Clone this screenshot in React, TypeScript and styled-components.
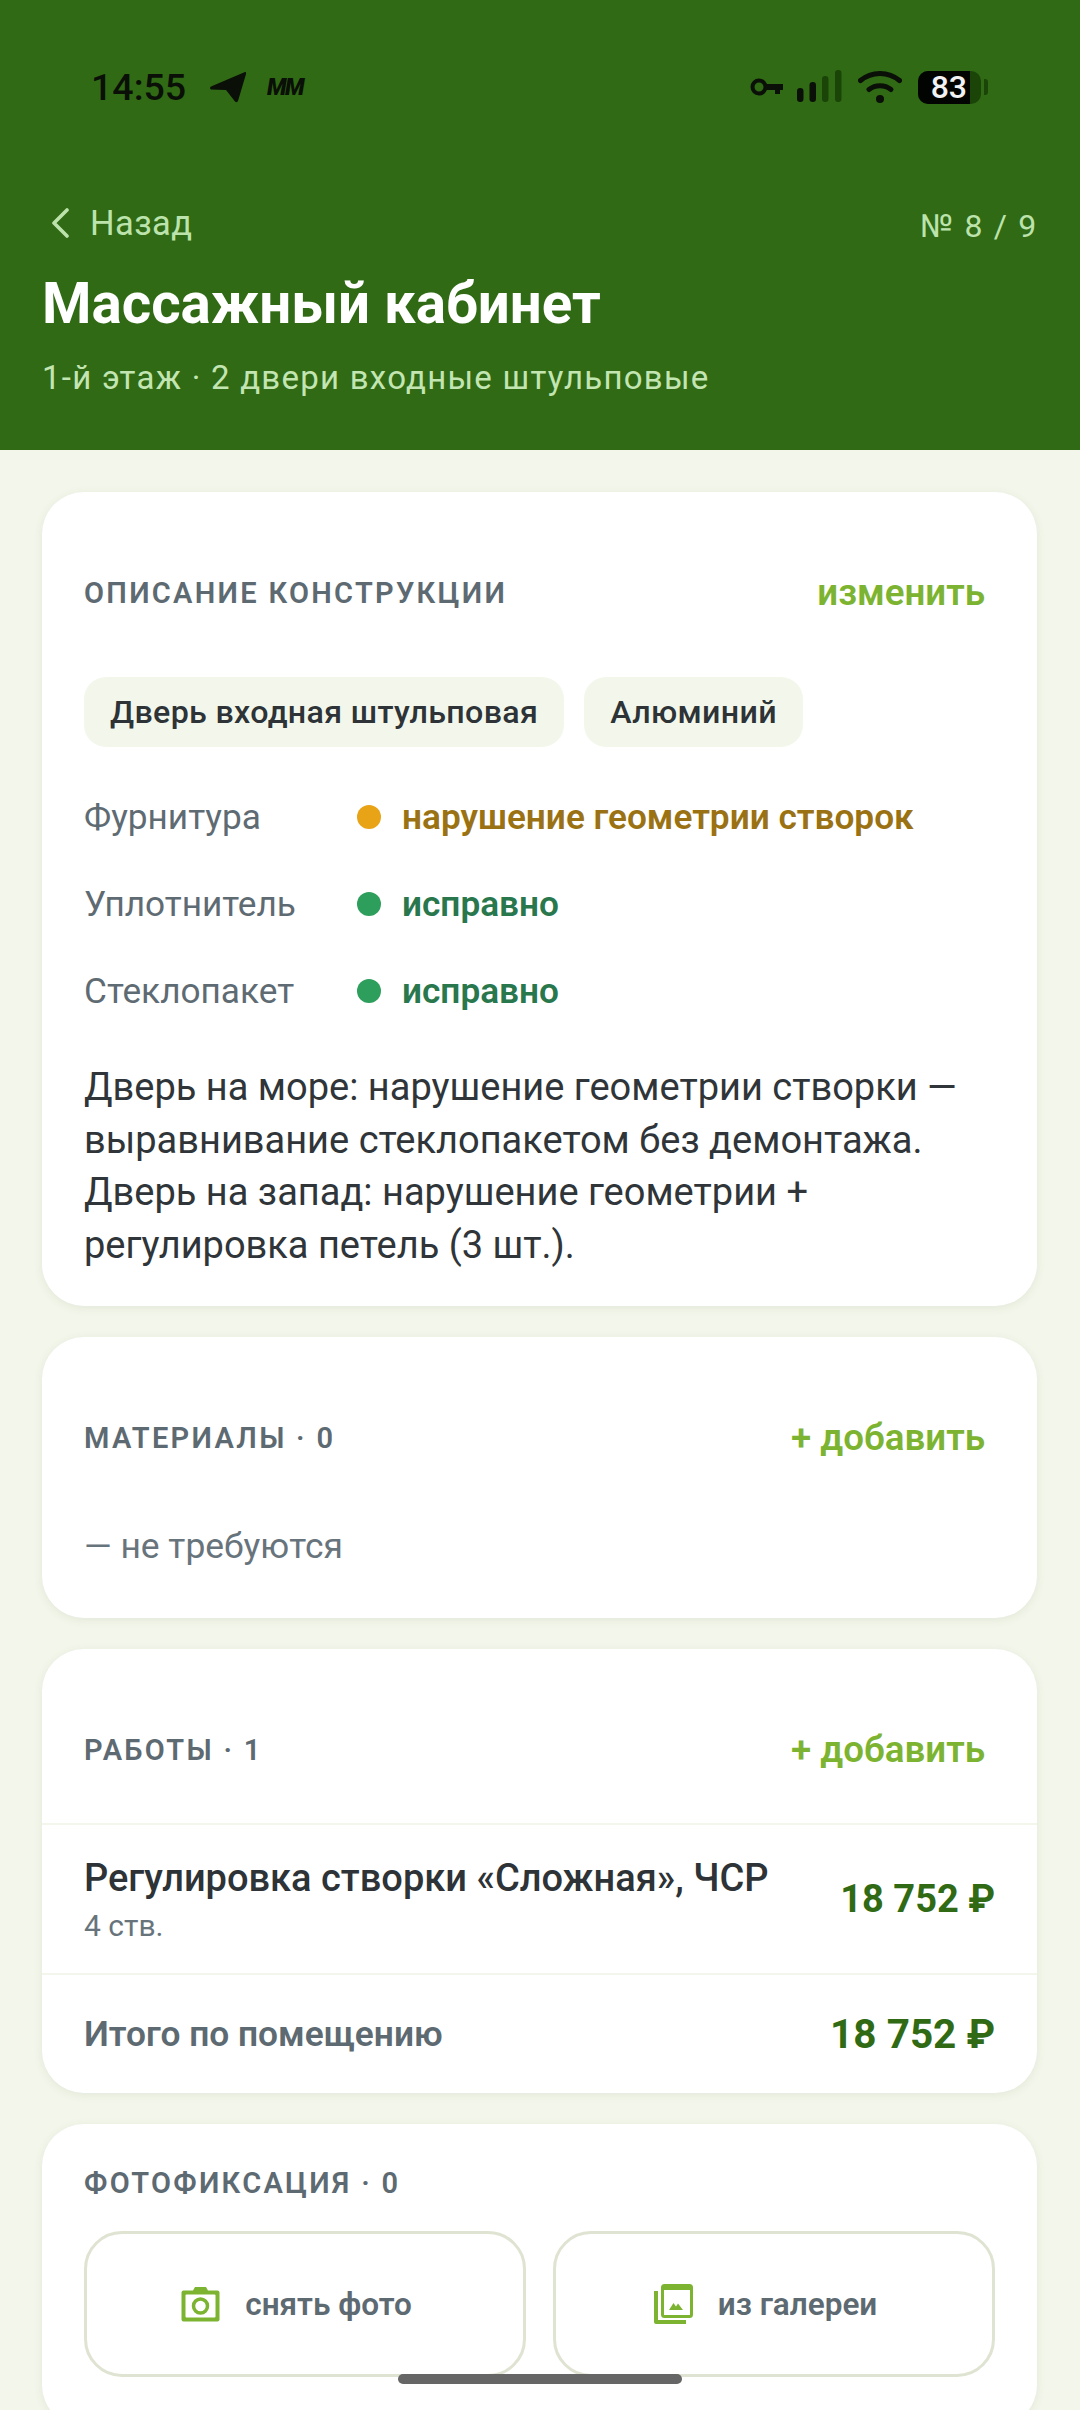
import React from "react";
import styled, { createGlobalStyle } from "styled-components";

const Global = createGlobalStyle`
  html, body { margin: 0; padding: 0; height: 2410px; overflow: hidden; background: #f3f7eb; }
  * { box-sizing: border-box; }
  body { font-family: Roboto, "Noto Sans", sans-serif; }
`;
const Screen = styled.div`
  position: relative; width: 1080px; height: 2410px; overflow: hidden; background: #f3f7eb;
`;
const Header = styled.header`
  height: 450px; background: #306a14; padding: 0 43px 0 42px; display: flex; flex-direction: column;
`;
const StatusBar = styled.div`
  padding: 0 49px; margin-top: 43px; display: flex; align-items: flex-start; justify-content: space-between; height: 88px;
`;
const StatusGroup = styled.div`
  display: flex; align-items: center; height: 88px;
`;
const Time = styled.span`
  font-size: 37.5px; font-weight: 500; color: #0a0f07; width: 118px; line-height: 88px; height: 88px;
`;
const MmMark = styled.span`
  font-size: 23px; font-weight: 900; font-style: italic; color: #0a0f07; margin-left: 20px; letter-spacing: -1.5px; line-height: 1;
`;
const Battery = styled.div`
  width: 63px; height: 33px; border-radius: 10px; background: #1a4408; margin-left: 16px;
  display: flex;
`;
const BatteryFill = styled.div`
  width: 52px; border-radius: 10px 0 0 10px; background: #020402; color: #f2f2f2; font-size: 32px; font-weight: 500; line-height: 33px; text-align: right; padding-right: 3px;
`;
const BatteryNub = styled.div`
  width: 4px; height: 16px; background: #1a4408; border-radius: 0 3px 3px 0; margin-left: 3px;
`;
const TopRow = styled.div`
  display: flex; justify-content: space-between; align-items: center; height: 48px; margin-top: 68px; color: #bde3ac;
`;
const Back = styled.div`
  display: flex; align-items: center; gap: 20px; font-size: 34.5px; padding-left: 8px; letter-spacing: 0.4px;
`;
const Counter = styled.div`
  font-size: 32px; letter-spacing: 1.7px; font-weight: 400; margin: 6px -1px 0 0;
`;
const Title = styled.h1`
  margin: 24px 0 0; font-size: 56.5px; line-height: 66px; font-weight: 700; color: #fff;
`;
const Sub = styled.div`
  margin-top: 21px; font-size: 33px; line-height: 40px; color: #c3e5b2; letter-spacing: 1.25px;
`;
const Content = styled.main`
  padding: 42px 43px 0 42px; display: flex; flex-direction: column; gap: 31px;
`;
const Card = styled.section<{ $top: number; $bottom: number }>`
  background: #fff; border-radius: 42px; box-shadow: 0 2px 10px rgba(60, 80, 50, 0.09);
  padding-top: ${(p) => p.$top}px; padding-bottom: ${(p) => p.$bottom}px;
`;
const CardHead = styled.div`
  display: flex; align-items: center; justify-content: space-between; height: 86px; padding: 0 10px 0 42px;
`;
const HeadLabel = styled.div`
  font-size: 29px; font-weight: 600; letter-spacing: 2.3px; color: #5d6a72; margin-top: 1px;
`;
const HeadAction = styled.button`
  border: 0; background: none; padding: 10px 42px 10px 10px; font: 600 36.7px Roboto, sans-serif; color: #7cb431;
`;
const Chips = styled.div`
  display: flex; gap: 20px; margin: 42px 42px 0;
`;
const Chip = styled.span`
  height: 70px; padding: 0 26px; border-radius: 22px; background: #f3f7eb; font-size: 32.2px; font-weight: 500; line-height: 70px; color: #2d3336; letter-spacing: 0.35px;
`;
const Specs = styled.div`
  margin: 26px 42px 0;
`;
const SpecRow = styled.div`
  display: grid; grid-template-columns: 273px 45px 1fr; align-items: center; height: 87px;
`;
const SpecLabel = styled.span`
  font-size: 35.2px; color: #5f6b73;
`;
const Dot = styled.span<{ $c: string }>`
  width: 24px; height: 24px; border-radius: 50%; background: ${(p) => p.$c};
`;
const SpecValue = styled.span<{ $c: string }>`
  font-size: 35.2px; font-weight: 600; color: ${(p) => p.$c};
`;
const Note = styled.p`
  margin: 27px 42px 0; font-size: 38px; line-height: 52.5px; color: #2f3538;
`;
const Empty = styled.div`
  margin: 44px 42px 0; font-size: 35.4px; line-height: 44px; color: #68747c;
`;
const Line = styled.div`
  height: 2px; background: #f3f7eb;
`;
const CardGap = styled.div`
  height: 31px;
`;
const WorkRow = styled.div`
  height: 148px; padding: 0 42px; display: flex; align-items: center; justify-content: space-between;
`;
const WorkTitle = styled.div`
  font-size: 38px; line-height: 48px; font-weight: 500; color: #2d3336;
`;
const WorkSub = styled.div`
  font-size: 30px; line-height: 36px; color: #68747c; margin-top: 6px;
`;
const Price = styled.div`
  font-size: 38px; font-weight: 700; color: #306a14;
`;
const TotalRow = styled.div`
  height: 118px; padding: 0 42px; display: flex; align-items: center; justify-content: space-between;
`;
const TotalLabel = styled.div`
  font-size: 35.3px; font-weight: 600; color: #5d6a72;
`;
const TotalPrice = styled.div`
  font-size: 40.5px; font-weight: 700; color: #306a14;
`;
const PlainHead = styled.div`
  margin: 0 42px; font-size: 29px; line-height: 36px; font-weight: 600; letter-spacing: 2.3px; color: #5d6a72;
`;
const PhotoGrid = styled.div`
  display: grid; grid-template-columns: 1fr 1fr; gap: 27px; margin: 30px 42px 0;
`;
const PhotoBtn = styled.button`
  height: 146px; padding: 0 17px 0 0; border: 3px solid #dfe3d1; border-radius: 38px; background: #fff; display: flex; align-items: center; justify-content: center; gap: 25px;
  font: 600 31.5px Roboto, sans-serif; color: #5d6a72;
`;
const HomeBar = styled.div`
  position: absolute; left: 398px; top: 2374px; width: 284px; height: 10px; border-radius: 5px; background: #666;
`;

const Telegram = () => (
  <svg width="38" height="32" viewBox="0 0 38 32">
    <path d="M36 1 2 15.500Q0 17 2 18.500L17 19l9 11.500Q28 32 29 30L37 3Q37.500.5 36 1z" fill="#0a0f07" />
  </svg>
);
const Key = () => (
  <svg width="34" height="20" viewBox="0 0 34 20" fill="none">
    <circle cx="9" cy="10" r="6.500" stroke="#0a0f07" strokeWidth="4" />
    <path d="M15 7h18v6h-3v4h-5v-4h-10z" fill="#0a0f07" />
  </svg>
);
const Signal = () => (
  <svg width="46" height="34" viewBox="0 0 46 34" style={{ marginLeft: 13 }}>
    <rect x="0" y="18" width="6.500" height="14" rx="3.200" fill="#0a0f07" />
    <rect x="12.500" y="12" width="6.500" height="20" rx="3.200" fill="#0a0f07" />
    <rect x="25" y="6" width="6.500" height="26" rx="3.200" fill="#1a4408" />
    <rect x="38" y="0" width="6.500" height="32" rx="3.200" fill="#1a4408" />
  </svg>
);
const Wifi = () => (
  <svg width="44" height="34" viewBox="0 0 44 34" fill="none" style={{ marginLeft: 15 }}>
    <path d="M2.500 10.500C13.500 1 30.500 1 41.500 10.500" stroke="#0a0f07" strokeWidth="5" strokeLinecap="round" />
    <path d="M11 19.500c6.500-5 15.500-5 22 0" stroke="#0a0f07" strokeWidth="5" strokeLinecap="round" />
    <circle cx="22" cy="29" r="4" fill="#0a0f07" />
  </svg>
);
const Chevron = () => (
  <svg width="20" height="30" viewBox="0 0 20 30" fill="none">
    <path d="M17 2 4 15l13 13" stroke="#bde3ac" strokeWidth="3.600" strokeLinecap="round" strokeLinejoin="round" />
  </svg>
);
const Camera = () => (
  <svg width="39" height="36" viewBox="0 0 39 36" fill="none">
    <path d="M12 4.500 14 1h11l2 3.500h9.500A2 2 0 0 1 38.500 6.500v27a2 2 0 0 1-2 2h-34a2 2 0 0 1-2-2v-27a2 2 0 0 1 2-2z" fill="#7cb431" />
    <rect x="4.500" y="8.500" width="30" height="23" rx="1" fill="#fff" />
    <circle cx="19.500" cy="20" r="7" stroke="#7cb431" strokeWidth="3.500" />
  </svg>
);
const Gallery = () => (
  <svg width="39" height="40" viewBox="0 0 39 40" fill="none">
    <path d="M0 7h4v29h28v4H2a2 2 0 0 1-2-2z" fill="#7cb431" />
    <rect x="8.500" y="1.500" width="29" height="31" rx="2" stroke="#7cb431" strokeWidth="3" />
    <rect x="10" y="3" width="26" height="3" fill="#7cb431" />
    <path d="M15 26l4.500-7 2.500 3.500 2-3 5 6.500z" fill="#7cb431" />
  </svg>
);

const specs = [
  { l: "Фурнитура", d: "#e8a317", c: "#9a7213", v: "нарушение геометрии створок" },
  { l: "Уплотнитель", d: "#2e9e5c", c: "#28774d", v: "исправно" },
  { l: "Стеклопакет", d: "#2e9e5c", c: "#28774d", v: "исправно" },
];

export default function App() {
  return (
    <Screen>
      <Global />
      <Header>
        <StatusBar>
          <StatusGroup>
            <Time>14:55</Time>
            <Telegram />
            <MmMark>ММ</MmMark>
          </StatusGroup>
          <StatusGroup>
            <Key />
            <Signal />
            <Wifi />
            <Battery>
              <BatteryFill>83</BatteryFill>
            </Battery>
            <BatteryNub />
          </StatusGroup>
        </StatusBar>
        <TopRow>
          <Back>
            <Chevron />
            Назад
          </Back>
          <Counter>№ 8 / 9</Counter>
        </TopRow>
        <Title>Массажный кабинет</Title>
        <Sub>1-й этаж · 2 двери входные штульповые</Sub>
      </Header>
      <Content>
        <Card $top={57} $bottom={35}>
          <CardHead>
            <HeadLabel>ОПИСАНИЕ КОНСТРУКЦИИ</HeadLabel>
            <HeadAction>изменить</HeadAction>
          </CardHead>
          <Chips>
            <Chip>Дверь входная штульповая</Chip>
            <Chip>Алюминий</Chip>
          </Chips>
          <Specs>
            {specs.map((s) => (
              <SpecRow key={s.l}>
                <SpecLabel>{s.l}</SpecLabel>
                <Dot $c={s.d} />
                <SpecValue $c={s.c}>{s.v}</SpecValue>
              </SpecRow>
            ))}
          </Specs>
          <Note>
            Дверь на море: нарушение геометрии створки — выравнивание стеклопакетом без демонтажа. Дверь на запад:
            нарушение геометрии + регулировка петель (3 шт.).
          </Note>
        </Card>
        <Card $top={57} $bottom={50}>
          <CardHead>
            <HeadLabel>МАТЕРИАЛЫ · 0</HeadLabel>
            <HeadAction>+ добавить</HeadAction>
          </CardHead>
          <Empty>— не требуются</Empty>
        </Card>
        <Card $top={57} $bottom={0}>
          <CardHead>
            <HeadLabel>РАБОТЫ · 1</HeadLabel>
            <HeadAction>+ добавить</HeadAction>
          </CardHead>
          <CardGap />
          <Line />
          <WorkRow>
            <div>
              <WorkTitle>Регулировка створки «Сложная», ЧСР</WorkTitle>
              <WorkSub>4 ств.</WorkSub>
            </div>
            <Price>18 752 ₽</Price>
          </WorkRow>
          <Line />
          <TotalRow>
            <TotalLabel>Итого по помещению</TotalLabel>
            <TotalPrice>18 752 ₽</TotalPrice>
          </TotalRow>
        </Card>
        <Card $top={41} $bottom={50}>
          <PlainHead>ФОТОФИКСАЦИЯ · 0</PlainHead>
          <PhotoGrid>
            <PhotoBtn>
              <Camera />
              снять фото
            </PhotoBtn>
            <PhotoBtn>
              <Gallery />
              из галереи
            </PhotoBtn>
          </PhotoGrid>
        </Card>
      </Content>
      <HomeBar />
    </Screen>
  );
}
